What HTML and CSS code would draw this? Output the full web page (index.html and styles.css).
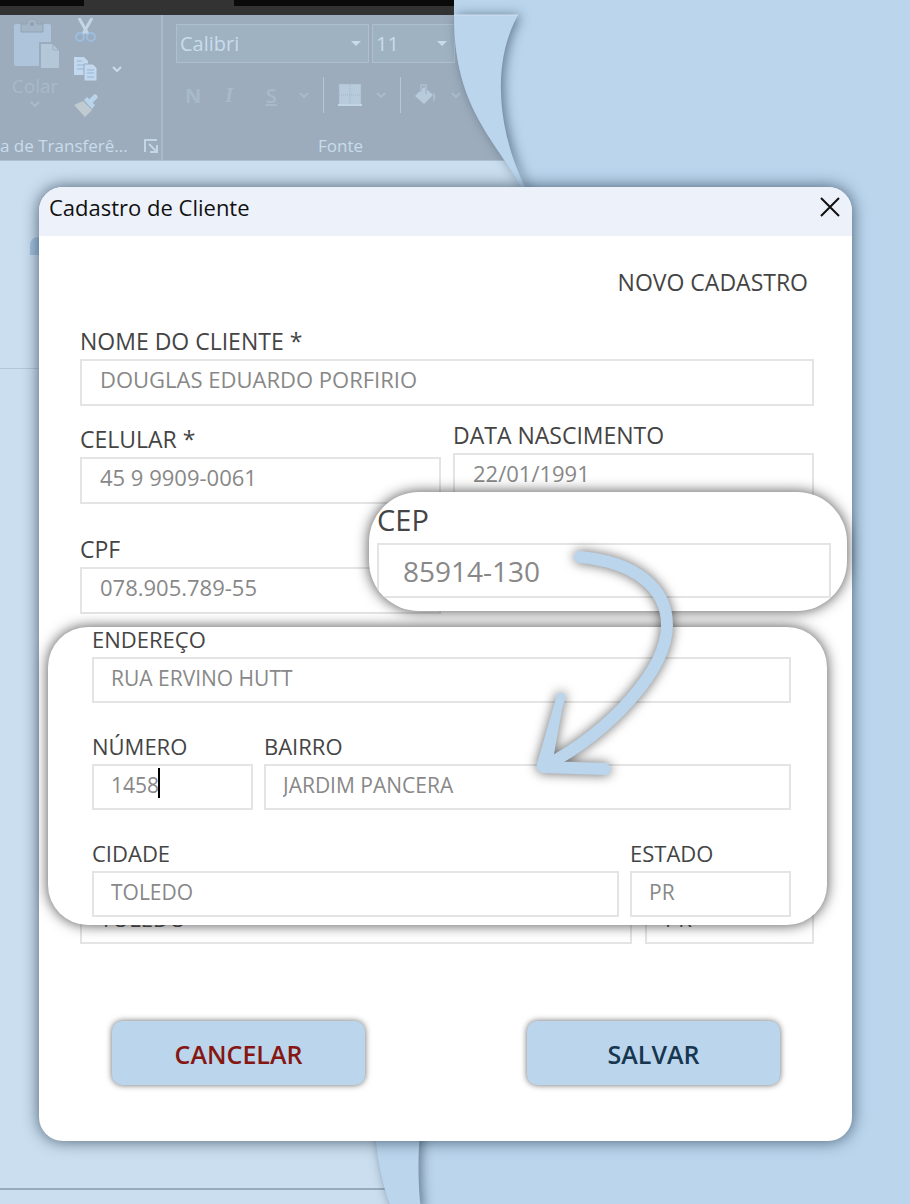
FILE: index.html
```html
<!DOCTYPE html>
<html lang="pt-br">
    <head>
        <meta charset="UTF-8">
        <title>Cadastro de Cliente</title>
        <link rel="stylesheet" href="styles.css">
    </head>
    <body>
        <!-- planilha ao fundo -->
        <div class="sheet">
            <div class="topbar"><i class="tab1"></i><i class="tab2"></i></div>
            <div class="ribbon">
                <div class="group clipboard">
                    <div class="tools">
                        <div class="paste">
                            <svg width="48" height="52" viewBox="0 0 48 52">
                                <rect x="1" y="5" width="37" height="42" rx="2" fill="#adc4da"/>
                                <path d="M8 5h6a5 5 0 0 1 10 0h6v8H8z" fill="#a3b6c7" stroke="#92a3b3"/>
                                <circle cx="19" cy="5" r="2" fill="#8fa0b0"/>
                                <path d="M27 24h13l7 7v19H27z" fill="#b3c7d9" stroke="#9cacbc" stroke-width="2"/>
                                <path d="M40 24v7h7" fill="none" stroke="#9cacbc"/>
                            </svg>
                            <span>Colar</span>
                            <svg class="arrow" width="10" height="6" viewBox="0 0 10 6"><path d="M1 1l4 4 4-4"/></svg>
                        </div>
                        <div class="small">
                            <svg width="24" height="26" viewBox="0 0 24 26">
                                <path d="M5 0l9 16M18 0L9 16" stroke="#c3d6e6" stroke-width="3" fill="none"/>
                                <circle cx="6" cy="19" r="4" fill="none" stroke="#9bbde0" stroke-width="2"/>
                                <circle cx="17" cy="19" r="4" fill="none" stroke="#9bbde0" stroke-width="2"/>
                            </svg>
                            <div class="copy">
                                <svg width="24" height="26" viewBox="0 0 24 26">
                                    <path d="M0 1h10l4 4v14H0z" fill="#c3d8ec"/>
                                    <path d="M3 5h5M3 9h7M3 13h7" stroke="#8fb4dc"/>
                                    <path d="M10 8h9l4 4v13H10z" fill="#c3d8ec" stroke="#9cacbc"/>
                                    <path d="M13 14h7M13 17h7M13 21h7" stroke="#8fb4dc"/>
                                </svg>
                                <svg class="arrow on" width="10" height="6" viewBox="0 0 10 6"><path d="M1 1l4 4 4-4"/></svg>
                            </div>
                            <svg width="24" height="24" viewBox="0 0 24 24">
                                <path d="M0 11l9-4 9 9-7 7z" fill="#bfcbd0"/>
                                <path d="M10 6l3-3 8 8-3 4z" fill="#b9d4eb"/>
                                <path d="M18 6l3-3" stroke="#b9d4eb" stroke-width="5" stroke-linecap="round"/>
                            </svg>
                        </div>
                    </div>
                    <div class="caption">
                        <span>a de Transferê...</span>
                        <svg width="14" height="14" viewBox="0 0 14 14"><path d="M1 13V1h12M5 5l8 8M13 6v7H6" fill="none" stroke="#c3d6e6" stroke-width="2"/></svg>
                    </div>
                </div>
                <div class="group font">
                    <div class="selects">
                        <div class="select family">Calibri<b></b></div>
                        <div class="select size">11<b></b></div>
                    </div>
                    <div class="format">
                        <strong>N</strong><em>I</em><u>S</u>
                        <svg class="arrow" width="10" height="6" viewBox="0 0 10 6"><path d="M1 1l4 4 4-4"/></svg>
                        <i class="bar"></i>
                        <svg width="24" height="24" viewBox="0 0 24 24"><path d="M1 1h22v22H1z" fill="#b8cbdc"/><path d="M12 1v21M1 12h22M1 1h22v21H1z" fill="none" stroke="#a3b5c5" stroke-dasharray="1 1"/><path d="M0 22h24" stroke="#c3d6e6" stroke-width="2"/></svg>
                        <svg class="arrow" width="10" height="6" viewBox="0 0 10 6"><path d="M1 1l4 4 4-4"/></svg>
                        <i class="bar"></i>
                        <svg width="22" height="22" viewBox="0 0 22 22"><path d="M0 12l9-9 9 8-9 9z" fill="#b8cbdc"/><path d="M6 8V1h5v9" fill="none" stroke="#a9bccd" stroke-width="2"/><path d="M18 8q5 5 0 10z" fill="#a9bccd"/></svg>
                        <svg class="arrow" width="10" height="6" viewBox="0 0 10 6"><path d="M1 1l4 4 4-4"/></svg>
                    </div>
                    <div class="caption">Fonte</div>
                </div>
            </div>
            <i class="blob"></i>
            <i class="line line1"></i>
            <i class="line line2"></i>
        </div>
        <svg class="wave" width="910" height="1204" viewBox="0 0 910 1204">
            <path d="M454 0V15C454 112 498 140 525 195L374 1100C374 1140 378 1175 390 1204H910V0z" fill="#bad5ec"/>
            <path class="fold" d="M454 15H518C494 58 493 125 529 195L421 1120Q416 1170 421 1210H392C378 1175 374 1140 374 1100L525 195C498 140 454 112 454 15z" fill="#bad5ec"/>
            <path d="M454 15H518" stroke="#d0e0ef"/>
        </svg>

        <!-- janela de cadastro -->
        <main class="dialog">
            <header class="title">
                <h1>Cadastro de Cliente</h1>
                <button type="button" class="close" aria-label="Fechar">
                    <svg width="20" height="20" viewBox="0 0 20 20"><path d="M1 1l18 18M19 1L1 19" stroke="#111" stroke-width="2"/></svg>
                </button>
            </header>
            <form class="form">
                <h2>NOVO CADASTRO</h2>
                <div class="field">
                    <label for="nome">NOME DO CLIENTE *</label>
                    <input type="text" id="nome" value="DOUGLAS EDUARDO PORFIRIO">
                </div>
                <div class="columns">
                    <div class="column left">
                        <div class="field">
                            <label for="celular">CELULAR *</label>
                            <input type="text" id="celular" value="45 9 9909-0061">
                        </div>
                        <div class="field">
                            <label for="cpf">CPF</label>
                            <input type="text" id="cpf" value="078.905.789-55">
                        </div>
                    </div>
                    <div class="column">
                        <div class="field">
                            <label for="nascimento">DATA NASCIMENTO</label>
                            <input type="text" id="nascimento" value="22/01/1991">
                        </div>
                    </div>
                </div>
                <div class="behind">
                    <input type="text" aria-label="Cidade" value="TOLEDO">
                    <input type="text" aria-label="Estado" value="PR">
                </div>
                <div class="buttons">
                    <button type="button" class="cancel">CANCELAR</button>
                    <button type="button" class="save">SALVAR</button>
                </div>

                <!-- destaque do endereço -->
                <div class="card address">
                    <div class="field">
                        <label for="endereco">ENDEREÇO</label>
                        <input type="text" id="endereco" value="RUA ERVINO HUTT">
                    </div>
                    <div class="row number">
                        <div class="field">
                            <label for="numero">NÚMERO</label>
                            <input type="text" id="numero" value="1458">
                            <i class="caret"></i>
                        </div>
                        <div class="field">
                            <label for="bairro">BAIRRO</label>
                            <input type="text" id="bairro" value="JARDIM PANCERA">
                        </div>
                    </div>
                    <div class="row city">
                        <div class="field">
                            <label for="cidade">CIDADE</label>
                            <input type="text" id="cidade" value="TOLEDO">
                        </div>
                        <div class="field">
                            <label for="estado">ESTADO</label>
                            <input type="text" id="estado" value="PR">
                        </div>
                    </div>
                </div>

                <!-- destaque do cep -->
                <div class="card cep">
                    <div class="field">
                        <label for="cep">CEP</label>
                        <input type="text" id="cep" value="85914-130">
                    </div>
                </div>
                <svg class="pointer" width="180" height="260" viewBox="520 540 180 260">
                    <path d="M580 557C635 562 667 588 667 625C667 670 610 732 545 766" stroke-width="12"/>
                    <path d="M561 697L541 766" stroke-width="9"/>
                    <path d="M543 767L605 769" stroke-width="12"/>
                    <path d="M559 712L545 765L549 768Z" fill="#bad5ec" stroke-width="5"/>
                </svg>
            </form>
        </main>
    </body>
</html>
```
FILE: styles.css
```css
*{
    box-sizing: border-box;
    margin: 0;
    padding: 0;
}
body{
    position: relative;
    min-height: 100vh;
    padding: 187px 58px 63px 39px;
    overflow-x: hidden;
    background-color: #bad5ec;
    font-family: "Open Sans", "Noto Sans", sans-serif;
    color: #444;
}
svg{
    display: block;
    flex: none;
}

/* planilha */
.sheet{
    position: absolute;
    top: 0;
    left: 0;
    bottom: 0;
    width: 526px;
    overflow: hidden;
    background-color: #cadeef;
    color: #c9dcec;
}
.topbar{
    display: flex;
    justify-content: space-between;
    height: 15px;
    padding-right: 72px;
    background-color: #333;
}
.tab1,.tab2{
    width: 84px;
    height: 6px;
    background-color: #0a0a0a;
}
.tab2{
    width: 220px;
}
.ribbon{
    display: flex;
    height: 146px;
    background-color: #9cacbc;
    border-bottom: 1px solid #aebfce;
}
.group{
    display: flex;
    flex-direction: column;
    justify-content: space-between;
    padding-bottom: 3px;
}
.clipboard{
    width: 163px;
    border-right: 2px solid #aabac9;
}
.tools{
    display: flex;
    gap: 13px;
    padding-left: 9px;
}
.paste{
    display: flex;
    flex-direction: column;
    align-items: center;
    width: 52px;
    padding-top: 4px;
    font-size: 19px;
    line-height: 30px;
    color: #a8bac9;
}
.paste svg:first-child{
    align-self: flex-end;
}
.small{
    display: flex;
    flex-direction: column;
    gap: 12px;
    padding-top: 3px;
}
.copy{
    display: flex;
    align-items: center;
    gap: 14px;
}
.arrow path{
    fill: none;
    stroke: #a9bccb;
    stroke-width: 2;
}
.on path{
    stroke: #c9dcec;
}
.caption{
    display: flex;
    align-items: center;
    gap: 16px;
    font-size: 17px;
    line-height: 22px;
}
.font{
    width: 354px;
    padding-top: 9px;
    padding-left: 13px;
}
.font .caption{
    padding-left: 142px;
}
.selects{
    display: flex;
    gap: 3px;
}
.select{
    display: flex;
    align-items: center;
    justify-content: space-between;
    height: 39px;
    padding: 0 7px 0 3px;
    border: 1px solid #aebfce;
    background-color: #9fb2c2;
    font-size: 20px;
}
.family{
    width: 193px;
}
.size{
    width: 83px;
}
.select b{
    border: 5px solid transparent;
    border-top-color: #c9dcec;
    border-bottom: 0;
}
.format{
    display: flex;
    align-items: center;
    gap: 14px;
    height: 36px;
    padding-left: 9px;
    margin-bottom: 8px;
    font-size: 20px;
    color: #a8bac9;
}
.format em,.format u{
    width: 28px;
    text-align: center;
    font-weight: 600;
}
.format em{
    font-family: "Liberation Serif", serif;
}
.bar{
    width: 1px;
    height: 36px;
    background-color: #b5c7d6;
}
.blob{
    position: absolute;
    top: 237px;
    left: 30px;
    width: 20px;
    height: 18px;
    border-radius: 8px 0 0 0;
    background-color: #a3c2e0;
}
.line{
    position: absolute;
    left: 0;
    width: 526px;
    height: 1px;
    background-color: #b2c6d9;
}
.line1{
    top: 368px;
}
.line2{
    bottom: 14px;
    height: 2px;
    background-color: #96aabd;
}
.wave{
    position: absolute;
    top: 0;
    left: 0;
}
.fold{
    filter: drop-shadow(3px 0 6px rgba(40,60,80,0.6));
}

/* janela */
.dialog{
    position: relative;
    border-radius: 24px;
    background-color: #fff;
    box-shadow: 0 0 16px rgba(30,50,70,0.75);
}
.title{
    display: flex;
    justify-content: space-between;
    height: 49px;
    padding: 0 12px 0 10px;
    border-radius: 24px 24px 0 0;
    background-color: #edf2fa;
    color: #111;
}
.title h1{
    font-size: 22px;
    font-weight: normal;
    line-height: 40px;
}
.close{
    height: 39px;
    border: 0;
    background: none;
}
.form{
    padding: 30px 38px 56px 41px;
}
.form h2{
    padding-right: 6px;
    margin-bottom: 24px;
    font-size: 23px;
    font-weight: normal;
    line-height: 33px;
    text-align: right;
}
.field label{
    display: block;
    font-size: 23px;
    line-height: 36px;
}
input{
    display: block;
    width: 100%;
    height: 47px;
    padding: 0 18px 7px;
    border: 2px solid #e4e4e4;
    background-color: #fff;
    font-family: inherit;
    font-size: 22px;
    color: #888;
}
.columns{
    display: grid;
    grid-template-columns: 1fr 1fr;
    gap: 12px;
    margin-top: 11px;
}
.column .field + .field{
    margin-top: 27px;
}
.left{
    padding-top: 4px;
}
.behind{
    display: grid;
    grid-template-columns: 1fr 169px;
    gap: 13px;
    margin-top: 283px;
}
.behind input{
    padding-bottom: 5px;
    color: #555;
}
.buttons{
    display: flex;
    justify-content: space-between;
    padding: 0 34px 0 32px;
    margin-top: 77px;
}
.buttons button{
    width: 253px;
    height: 64px;
    padding-top: 2px;
    border: 0;
    border-radius: 10px;
    background-color: #bad5ec;
    box-shadow: 0 0 6px rgba(0,0,0,0.6);
    font-family: inherit;
    font-size: 25px;
    font-weight: 600;
}
.buttons .cancel{
    color: #861612;
}
.buttons .save{
    color: #17364f;
}

/* destaques */
.card{
    position: absolute;
    background-color: #fff;
    box-shadow: 0 0 14px rgba(0,0,0,0.7);
}
.address{
    top: 440px;
    left: 9px;
    right: 25px;
    height: 298px;
    padding: 0 36px 0 44px;
    border-radius: 40px;
}
.address label{
    margin-bottom: 5px;
    font-size: 22px;
    line-height: 25px;
}
.address input{
    height: 46px;
    padding: 0 17px 4px;
    font-size: 21px;
}
.row{
    display: grid;
    gap: 11px;
    margin-top: 31px;
}
.number{
    grid-template-columns: 161px 1fr;
}
.city{
    grid-template-columns: 1fr 161px;
}
.row .field{
    position: relative;
}
.caret{
    position: absolute;
    top: 34px;
    left: 66px;
    width: 2px;
    height: 30px;
    background-color: #000;
}
.cep{
    top: 305px;
    left: 330px;
    right: 5px;
    height: 119px;
    padding: 10px 16px 0 8px;
    overflow: hidden;
    border-radius: 50px;
}
.cep label{
    margin-bottom: 5px;
    font-size: 29px;
}
.cep input{
    height: 55px;
    padding: 0 24px;
    font-size: 28px;
}
.pointer{
    position: absolute;
    top: 353px;
    left: 481px;
    overflow: visible;
    fill: none;
    stroke: #bad5ec;
    stroke-linecap: round;
    stroke-linejoin: round;
    filter: drop-shadow(0 0 6px rgba(0,0,0,0.6));
}
```
